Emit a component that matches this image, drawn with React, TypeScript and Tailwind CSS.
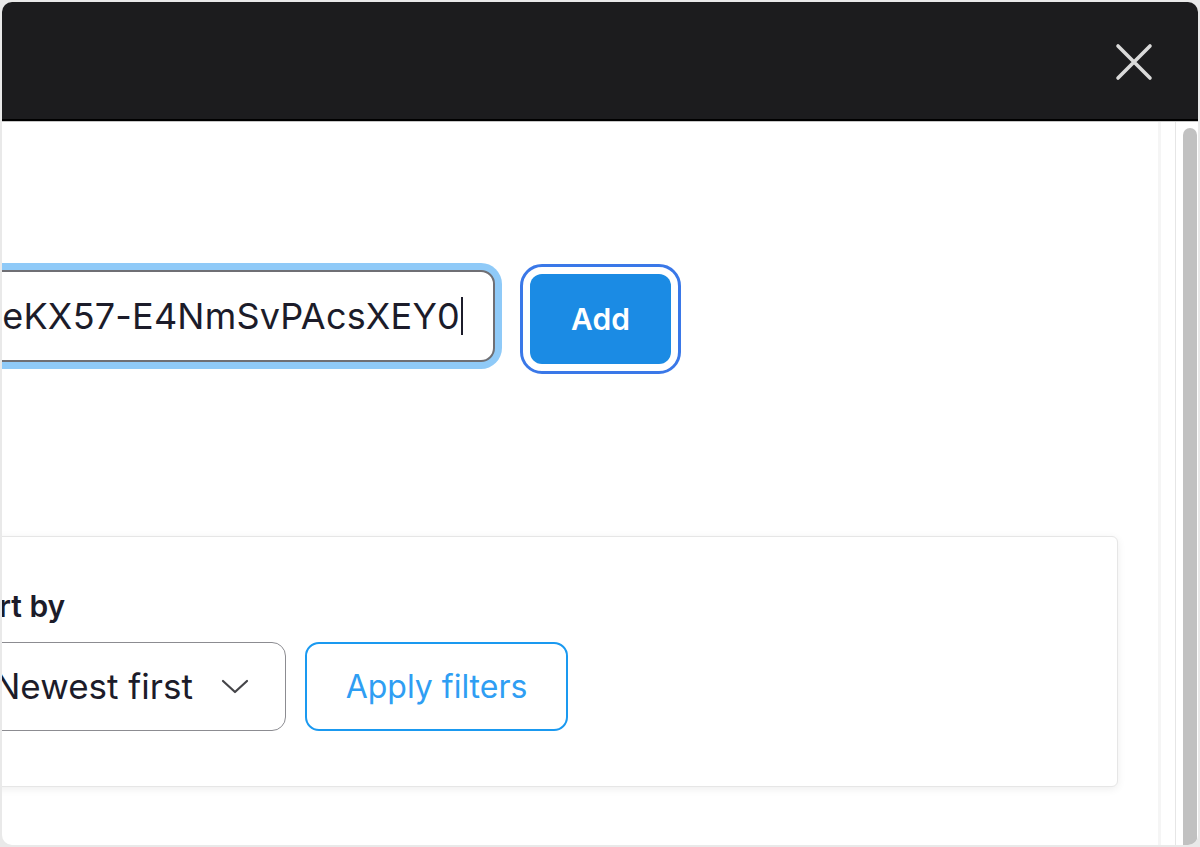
import React from "react";

export default function App() {
  return (
    <div
      className="w-[1200px] h-[847px] bg-[#e9e9e9] p-[2px] overflow-hidden"
      style={{ fontFamily: "Inter, 'Noto Sans', sans-serif" }}
    >
      <div className="h-full rounded-[10px] overflow-hidden bg-white flex flex-col">
        {/* Header */}
        <header className="h-[117px] shrink-0 bg-[#1c1c1e] flex items-center justify-end pr-[44px]">
          <svg width="40" height="40" viewBox="0 0 40 40" className="mt-[2px]">
            <path
              d="M4 4 L36 36 M36 4 L4 36"
              stroke="#dadada"
              strokeWidth="3.6"
              strokeLinecap="round"
              fill="none"
            />
          </svg>
        </header>
        <div className="h-[2px] shrink-0 bg-black" />
        <div className="h-[1px] shrink-0 bg-[#c6c6c6]" />

        {/* Body */}
        <div className="flex flex-1 min-h-0">
          <main className="flex-1 min-w-0 overflow-hidden border-r-[3px] border-[#f5f5f5]">
            <div className="-ml-[400px] pt-[148px]">
              {/* Input row */}
              <div className="flex items-start gap-[35px]">
                <div className="w-[893px] h-[92px] rounded-[14px] border-2 border-[#6f6f74] bg-white shadow-[0_0_0_7px_#8fcaf8] flex items-center justify-end pr-[30px] overflow-hidden">
                  <span className="whitespace-nowrap text-[36px] leading-none text-[#1c1c2a] tracking-[0.2px]">
                    eKX57-E4NmSvPAcsXEY0
                  </span>
                  <span className="w-[2px] h-[38px] bg-[#1c1c2a] ml-[1px]" />
                </div>
                <button className="mt-[4px] w-[141px] h-[90px] rounded-[12px] bg-[#1b8be4] text-white text-[30px] font-semibold outline-3 outline-[#3a78e8] outline-offset-[7px]">
                  Add
                </button>
              </div>

              {/* Filter card */}
              <div className="mt-[172px] ml-[300px] w-[1216px] rounded-[6px] border border-[#e6e6e6] bg-white shadow-[0_2px_8px_rgba(0,0,0,0.07)] pt-[53px] pb-[55px] pl-[70px]">
                <div className="-ml-[12px] text-[30px] leading-[32px] font-semibold text-[#1c1c2a] whitespace-nowrap">
                  Sort by
                </div>
                <div className="mt-[20px] flex items-center gap-[19px]">
                  <div className="w-[313px] h-[89px] rounded-[14px] border-[1.5px] border-[#8c8c91] flex items-center pl-[20px] pr-[36px] justify-between">
                    <span className="text-[35px] leading-none text-[#1c1c2a] whitespace-nowrap">
                      Newest first
                    </span>
                    <svg width="28" height="16" viewBox="0 0 28 16">
                      <path
                        d="M2 2 L14 13 L26 2"
                        stroke="#444448"
                        strokeWidth="2.2"
                        strokeLinecap="round"
                        strokeLinejoin="round"
                        fill="none"
                      />
                    </svg>
                  </div>
                  <button className="w-[263px] h-[89px] rounded-[14px] border-[2.5px] border-[#1a99f0] text-[#2f9ef3] text-[32px] leading-none">
                    Apply filters
                  </button>
                </div>
              </div>
            </div>
          </main>
          <div className="w-[15px] shrink-0 border-r border-[#e6e6e6]" />
          <div className="w-[22px] shrink-0 pt-[6px] pl-[7px] pr-[1px]">
            <div className="h-full rounded-t-[7px] rounded-br-[6px] bg-[#c1c1c1]" />
          </div>
        </div>
      </div>
    </div>
  );
}
